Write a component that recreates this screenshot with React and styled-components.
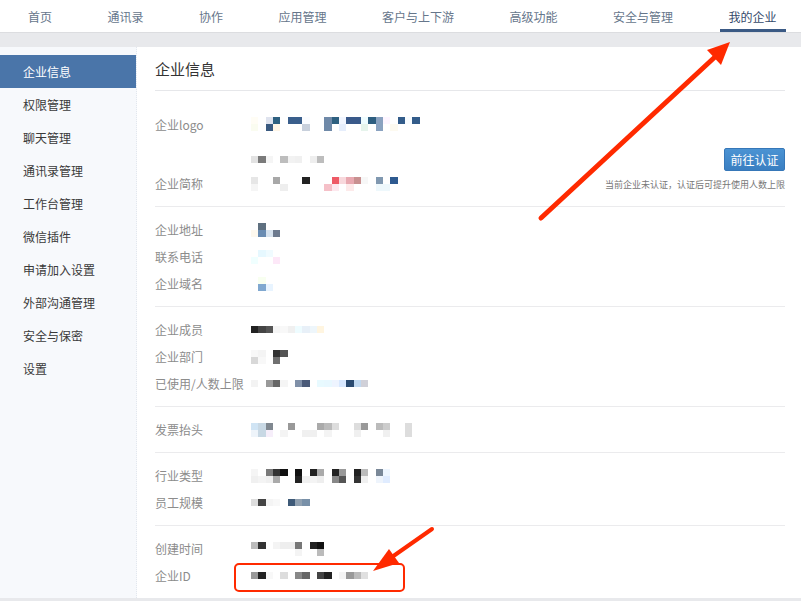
import React from 'react'
import styled, { createGlobalStyle } from 'styled-components'

const GlobalStyle = createGlobalStyle`
    html, body {
        margin: 0;
        padding: 0;
        background: #e8e9ec;
    }
    body {
        font-family: "Noto Sans CJK SC", "Noto Sans", "Liberation Sans", sans-serif;
        color: #333;
    }
    * {
        box-sizing: border-box;
    }
`

const Page = styled.div`
    position: relative;
    width: 801px;
    height: 601px;
    display: flex;
    flex-direction: column;
    overflow: hidden;
`

const TopNav = styled.nav`
    height: 33px;
    flex: none;
    display: flex;
    gap: 37.5px;
    padding-left: 19px;
    background: #fff;
    border-bottom: 1px solid #dcdde0;
`

const NavItem = styled.div`
    height: 32px;
    padding: 0 9px;
    font-size: 12px;
    line-height: 34px;
    white-space: nowrap;
    color: ${p => (p.$active ? '#34496a' : '#66768b')};
    box-shadow: ${p => (p.$active ? 'inset 0 -3px 0 #3b5a85' : 'none')};
`

const Body = styled.div`
    flex: 1;
    min-height: 0;
    padding: 14px 0 3px;
    background: #e8e9ec;
`

const Main = styled.div`
    height: 100%;
    display: flex;
    background: #fff;
    overflow: hidden;
`

const Sidebar = styled.aside`
    width: 137px;
    flex: none;
    padding-top: 8px;
    background: #f7f9fc;
    border-right: 1px dotted #e2e7ee;
`

const SideItem = styled.div`
    height: 33px;
    padding-left: 23px;
    font-size: 12px;
    line-height: 33px;
    color: ${p => (p.$active ? '#fff' : '#3a3a3a')};
    background: ${p => (p.$active ? '#4a75a9' : 'transparent')};
`

const Content = styled.section`
    flex: 1;
    min-width: 0;
    padding: 0 16px 0 18px;
`

const Title = styled.h2`
    margin: 0;
    height: 44px;
    font-size: 15px;
    font-weight: 400;
    line-height: 43px;
    color: #333;
    border-bottom: 1px solid #e6e7ea;
`

const Block = styled.div`
    display: flex;
    padding: 9px 0;
    border-bottom: ${p => (p.$last ? 'none' : '1px solid #ebebed')};
`

const Fields = styled.div`
    flex: 1;
`

const Row = styled.div`
    height: ${p => p.$h || 27}px;
    display: grid;
    grid-template-columns: 96px 1fr;
    align-items: center;
`

const Label = styled.span`
    font-size: 12px;
    color: #8c8c8c;
    white-space: nowrap;
`

const Verify = styled.div`
    display: flex;
    flex-direction: column;
    align-items: flex-end;
    justify-content: flex-end;
    padding-bottom: 5px;
`

const VerifyButton = styled.button`
    width: 61px;
    height: 23px;
    margin-bottom: 7px;
    padding: 0;
    font-family: inherit;
    font-size: 12px;
    color: #fff;
    border: 1px solid #3677b8;
    border-radius: 2px;
    background: linear-gradient(#4b93d3, #3a7fc2);
`

const Note = styled.div`
    font-size: 9px;
    line-height: 14px;
    color: #777;
    white-space: nowrap;
`

const MosaicBox = styled.div`
    display: flex;
    flex-direction: column;
`

const MosaicRow = styled.div`
    display: flex;
    height: ${p => p.$h || 7}px;
`

const Cell = styled.span`
    width: 7.33px;
    flex: none;
    background: ${p => p.$c};
`

const Overlay = styled.svg`
    position: absolute;
    left: 0;
    top: 0;
    pointer-events: none;
`

const navItems = ['首页', '通讯录', '协作', '应用管理', '客户与上下游', '高级功能', '安全与管理', '我的企业']
const sideItems = ['企业信息', '权限管理', '聊天管理', '通讯录管理', '工作台管理', '微信插件', '申请加入设置', '外部沟通管理', '安全与保密', '设置']

// blurred values: one string per row, '.' is an empty cell
const mosaics = {
    logo: [
        'fffdf5 . dfe3ee 2e6080 . 3a5f8c 3a5f8c fafcff . . 6f89a8 2e6080 f2f6ff 3a5a8a 3a5a8a eefcff 2e5e80 8aa2c0 fdf5ff . 335c8a f8fcff 335c8a',
        'fafcf0 . 3a5a80 fff5e6 . . . c8d0dc . . 6f89a8 . e6eefc . . e6f4ec . 8aa2c0 . fdfaf0',
    ],
    sub: ['e2e2e2 7a7a7a f5f5f5 . bdbdbd f2f2f2 f0f0f0 . eeeeee bdbdbd'],
    short: [
        'e6e6e6 . . a8a8a8 . . . 222222 . . . ee5a66 f8d8dc e8a8b0 c89090 f7f7f7 . 8098b0 . 2e5a90',
        'f5f5f5 . . . eeeeee . . . . . f5c0c8 fde8ee . fdeaea . . . eef8fc eef8fc',
    ],
    address: ['. 5f7080', 'fdf8ee 6a8cb2 d6e2ee 6d7a8e'],
    phone: ['. e6f8ff f0fbff', 'f0ffff . . fde8f8'],
    domain: ['. f8fff0', '. 80a8d0 e8f4ff'],
    members: ['222222 444444 555555 f5f5f5 f8f8f8 f0f0f0 eefcff e8f0f8 eef6fb fff5e0'],
    depts: ['f8f8f8 f4f4f4 . 333333 555555', 'd8d8d8 f8f8f8 . 707070'],
    quota: ['f3f3f3 . 999999 666666 f5f5f5 . 8090a8 4a5a78 . e8faff e8f8ff eef4ff d8e8ff 2a4a70 c0d8f0 d0d0d8'],
    invoice: [
        'd0e4f4 c8d8e4 808890 . . 999999 . . . aaaaaa bbbbbb dddddd . . dddddd 999999 . bbbbbb cccccc . . dddddd',
        'eef4fa c8d8e4 f6eefa . f4f4f4 . . f0f0f0 f0f0f0 . f4f4f4 . . . f0f0f0 . . . f0f0f0 . . dddddd',
    ],
    industry: [
        'f5f5f5 . 7a7a7a 333333 111111 . 111111 . 222222 aaaaaa . 222222 999999 . 222222 bbbbbb . 7a8898 eef6ff',
        'f0f0f0 f4f4f4 f0f0f0 aaaaaa . . 222222 f0f0f0 f4f4f4 eeeeee . 888888 555555 . 333333 f0f0f0 . eef4fc e0ecff',
    ],
    scale: ['dddddd 444444 f4f4f4 f8f8f8 . 3e5a78 90a0b0 7890a8'],
    created: ['bbbbbb 333333 . f4f4f4 eeeeee eeeeee 777777 . 222222 111111', '. . . . . . f4f4f4 . . bbbbbb'],
    id: ['999999 222222 f8f8f8 . dddddd . 888888 666666 . 444444 222222 . f4f4f4 999999 bbbbbb e0e0e0'],
}

function Mosaic({ name }) {
    return (
        <MosaicBox>
            {mosaics[name].map((row, i) => (
                <MosaicRow key={i}>
                    {row.split(' ').map((c, j) => (
                        <Cell key={j} $c={c === '.' ? 'transparent' : '#' + c} />
                    ))}
                </MosaicRow>
            ))}
        </MosaicBox>
    )
}

function Field({ label, value, h }) {
    return (
        <Row $h={h}>
            <Label>{label}</Label>
            <Mosaic name={value} />
        </Row>
    )
}

export default function App() {
    return (
        <Page>
            <GlobalStyle />
            <TopNav>
                {navItems.map((n) => (
                    <NavItem key={n} $active={n === '我的企业'}>{n}</NavItem>
                ))}
            </TopNav>
            <Body>
                <Main>
                    <Sidebar>
                        {sideItems.map((s, i) => (
                            <SideItem key={s} $active={i === 0}>{s}</SideItem>
                        ))}
                    </Sidebar>
                    <Content>
                        <Title>企业信息</Title>
                        <Block>
                            <Fields>
                                <Field label="企业logo" value="logo" h={48} />
                                <Field label="" value="sub" h={22} />
                                <Field label="企业简称" value="short" />
                            </Fields>
                            <Verify>
                                <VerifyButton>前往认证</VerifyButton>
                                <Note>当前企业未认证，认证后可提升使用人数上限</Note>
                            </Verify>
                        </Block>
                        <Block>
                            <Fields>
                                <Field label="企业地址" value="address" />
                                <Field label="联系电话" value="phone" />
                                <Field label="企业域名" value="domain" />
                            </Fields>
                        </Block>
                        <Block>
                            <Fields>
                                <Field label="企业成员" value="members" />
                                <Field label="企业部门" value="depts" />
                                <Field label="已使用/人数上限" value="quota" />
                            </Fields>
                        </Block>
                        <Block>
                            <Fields>
                                <Field label="发票抬头" value="invoice" />
                            </Fields>
                        </Block>
                        <Block>
                            <Fields>
                                <Field label="行业类型" value="industry" />
                                <Field label="员工规模" value="scale" />
                            </Fields>
                        </Block>
                        <Block $last>
                            <Fields>
                                <Field label="创建时间" value="created" />
                                <Field label="企业ID" value="id" />
                            </Fields>
                        </Block>
                    </Content>
                </Main>
            </Body>

            {/* annotation marks drawn over the screenshot */}
            <Overlay width="801" height="601" viewBox="0 0 801 601">
                <line x1="541" y1="218" x2="716" y2="56" stroke="#ff2a00" strokeWidth="5" strokeLinecap="round" />
                <polygon points="730,42 707,50 721,65" fill="#ff2a00" />
                <line x1="432" y1="529" x2="392" y2="557" stroke="#ff2a00" strokeWidth="4" strokeLinecap="round" />
                <polygon points="373,571 389,549 399,563" fill="#ff2a00" />
                <rect x="235" y="564" width="169" height="27" rx="4" fill="none" stroke="#ff2a00" strokeWidth="2" />
            </Overlay>
        </Page>
    )
}
